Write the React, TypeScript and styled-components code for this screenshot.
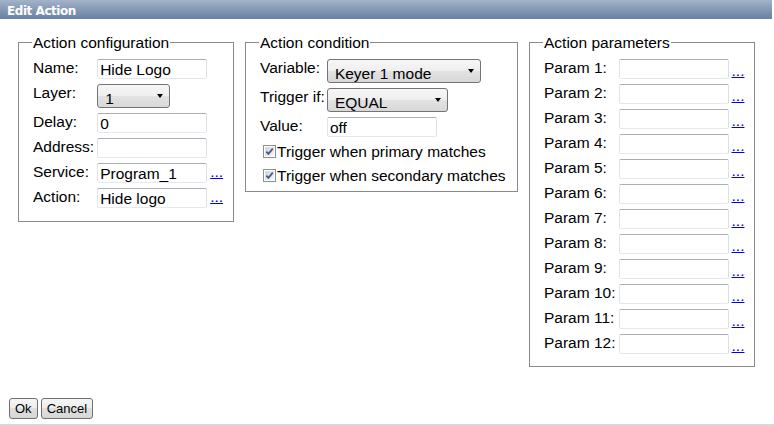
import React from "react";
import styled, { createGlobalStyle } from "styled-components";

const FONT = `"Liberation Sans", Arial, sans-serif`;

const GlobalStyle = createGlobalStyle`
  html, body { margin: 0; padding: 0; background: #fff; }
  body { font-family: ${FONT}; font-size: 15.5px; color: #000; }
`;

const Dialog = styled.div`
  width: 774px;
  height: 426px;
  box-sizing: border-box;
  border-bottom: 2px solid #d8d8d8;
  display: flex;
  flex-direction: column;
  overflow: hidden;
`;

const TitleBar = styled.div`
  width: 772px;
  height: 19px;
  flex: none;
  box-sizing: border-box;
  padding: 2px 0 0 7px;
  background: linear-gradient(to bottom, #a3b3c9 0%, #8599b5 50%, #6882a4 100%);
  color: #fff;
  font: bold 12px "DejaVu Sans", Verdana, sans-serif;
  letter-spacing: -0.45px;
  line-height: 18px;
  white-space: nowrap;
`;

const Panels = styled.div`
  display: flex;
  align-items: flex-start;
  gap: 11px;
  padding: 15px 0 0 18px;
`;

const Group = styled.fieldset<{ $w: number; $pb: number }>`
  width: ${(p) => p.$w}px;
  box-sizing: border-box;
  min-width: 0;
  margin: 0;
  padding: 8px 10px ${(p) => p.$pb}px 14px;
  border: 1px solid #8a8a8a;
`;

const Legend = styled.legend`
  padding: 0 1px;
  margin-left: -1px;
  font-size: 15.5px;
  line-height: 17px;
  white-space: nowrap;
`;

const FormGrid = styled.div<{ $cols: string; $gap: number }>`
  display: grid;
  grid-template-columns: ${(p) => p.$cols};
  justify-content: start;
  justify-items: start;
  column-gap: ${(p) => p.$gap}px;
  row-gap: 5px;
  align-items: start;
`;

const Label = styled.span`
  line-height: 17px;
  white-space: nowrap;
`;

const TextInput = styled.input`
  width: 110px;
  height: 20px;
  box-sizing: border-box;
  margin: 0;
  padding: 2px 2px 0;
  border: 1px solid;
  border-color: #abadb3 #dbdfe6 #e3e9ef #e2e3ea;
  border-radius: 2px;
  background: #fff;
  color: #000;
  font: 15.5px ${FONT};
  outline: none;
`;

const SelectWrap = styled.div<{ $w: number }>`
  position: relative;
  width: ${(p) => p.$w}px;
  height: 24px;
`;

const Select = styled.select`
  appearance: none;
  -webkit-appearance: none;
  width: 100%;
  height: 24px;
  box-sizing: border-box;
  margin: 0;
  padding: 4px 18px 0 7px;
  border: 1px solid #747474;
  border-radius: 3px;
  background: linear-gradient(to bottom, #f6f6f6 0%, #efefef 48%, #e2e2e2 52%, #d8d8d8 100%);
  color: #000;
  font: 15.5px ${FONT};
  outline: none;
`;

const Arrow = styled.span`
  position: absolute;
  right: 7px;
  top: 50%;
  margin-top: -2px;
  width: 0;
  height: 0;
  border-left: 3.5px solid transparent;
  border-right: 3.5px solid transparent;
  border-top: 4px solid #000;
  pointer-events: none;
`;

const More = styled.a<{ $drop: number }>`
  color: #0000ee;
  text-decoration: underline;
  line-height: 17px;
  padding-top: ${(p) => p.$drop}px;
  cursor: pointer;
  white-space: nowrap;
`;

const CheckRow = styled.label`
  grid-column: 1 / -1;
  display: flex;
  align-items: center;
  height: 19px;
  line-height: 17px;
  white-space: nowrap;
`;

const CheckBox = styled.span`
  flex: none;
  display: inline-flex;
  width: 13px;
  height: 13px;
  margin: 0 1px 0 3px;
`;

const ButtonBar = styled.div`
  display: flex;
  gap: 3px;
  margin-top: 31px;
  padding-left: 9px;
`;

const Button = styled.button`
  height: 21px;
  box-sizing: border-box;
  margin: 0;
  padding: 0 5px;
  border: 1px solid #707070;
  border-radius: 3px;
  background: linear-gradient(to bottom, #f5f5f5 0%, #ededed 50%, #e0e0e0 50%, #d6d6d6 100%);
  color: #000;
  font: 13px ${FONT};
  line-height: 19px;
`;

const Check = () => (
  <CheckBox>
    <svg width="13" height="13" viewBox="0 0 13 13">
      <defs>
        <linearGradient id="cbg" x1="0" y1="0" x2="1" y2="1">
          <stop offset="0" stopColor="#cfd4db" />
          <stop offset="1" stopColor="#f4f6f9" />
        </linearGradient>
      </defs>
      <rect x="0.5" y="0.5" width="12" height="12" fill="#fff" stroke="#8e8f8f" />
      <rect x="2" y="2" width="9" height="9" fill="url(#cbg)" />
      <path d="M3.3 6.6 L5.4 8.9 L9.8 3.6" fill="none" stroke="#44598a" strokeWidth="1.7" />
    </svg>
  </CheckBox>
);

const Dropdown = ({ w, value }: { w: number; value: string }) => (
  <SelectWrap $w={w}>
    <Select defaultValue={value}>
      <option value={value}>{value}</option>
    </Select>
    <Arrow />
  </SelectWrap>
);

const params = Array.from({ length: 12 }, (_, i) => `Param ${i + 1}:`);

export default function App() {
  return (
    <>
      <GlobalStyle />
      <Dialog>
        <TitleBar>Edit Action</TitleBar>
        <Panels>
          <Group $w={216} $pb={13}>
            <Legend>Action configuration</Legend>
            <FormGrid $cols="max-content 110px max-content" $gap={3}>
              <Label>Name:</Label>
              <TextInput defaultValue="Hide Logo" />
              <span />
              <Label>Layer:</Label>
              <Dropdown w={73} value="1" />
              <span />
              <Label>Delay:</Label>
              <TextInput defaultValue="0" />
              <span />
              <Label>Address:</Label>
              <TextInput defaultValue="" />
              <span />
              <Label>Service:</Label>
              <TextInput defaultValue="Program_1" />
              <More $drop={0}>...</More>
              <Label>Action:</Label>
              <TextInput defaultValue="Hide logo" />
              <More $drop={0}>...</More>
            </FormGrid>
          </Group>

          <Group $w={273} $pb={6}>
            <Legend>Action condition</Legend>
            <FormGrid $cols="max-content 1fr" $gap={2}>
              <Label>Variable:</Label>
              <Dropdown w={154} value="Keyer 1 mode" />
              <Label>Trigger if:</Label>
              <Dropdown w={121} value="EQUAL" />
              <Label>Value:</Label>
              <TextInput defaultValue="off" />
              <CheckRow>
                <Check />
                Trigger when primary matches
              </CheckRow>
              <CheckRow>
                <Check />
                Trigger when secondary matches
              </CheckRow>
            </FormGrid>
          </Group>

          <Group $w={226} $pb={12}>
            <Legend>Action parameters</Legend>
            <FormGrid $cols="max-content 110px max-content" $gap={3}>
              {params.map((p) => (
                <React.Fragment key={p}>
                  <Label>{p}</Label>
                  <TextInput defaultValue="" />
                  <More $drop={3}>...</More>
                </React.Fragment>
              ))}
            </FormGrid>
          </Group>
        </Panels>
        <ButtonBar>
          <Button>Ok</Button>
          <Button>Cancel</Button>
        </ButtonBar>
      </Dialog>
    </>
  );
}
